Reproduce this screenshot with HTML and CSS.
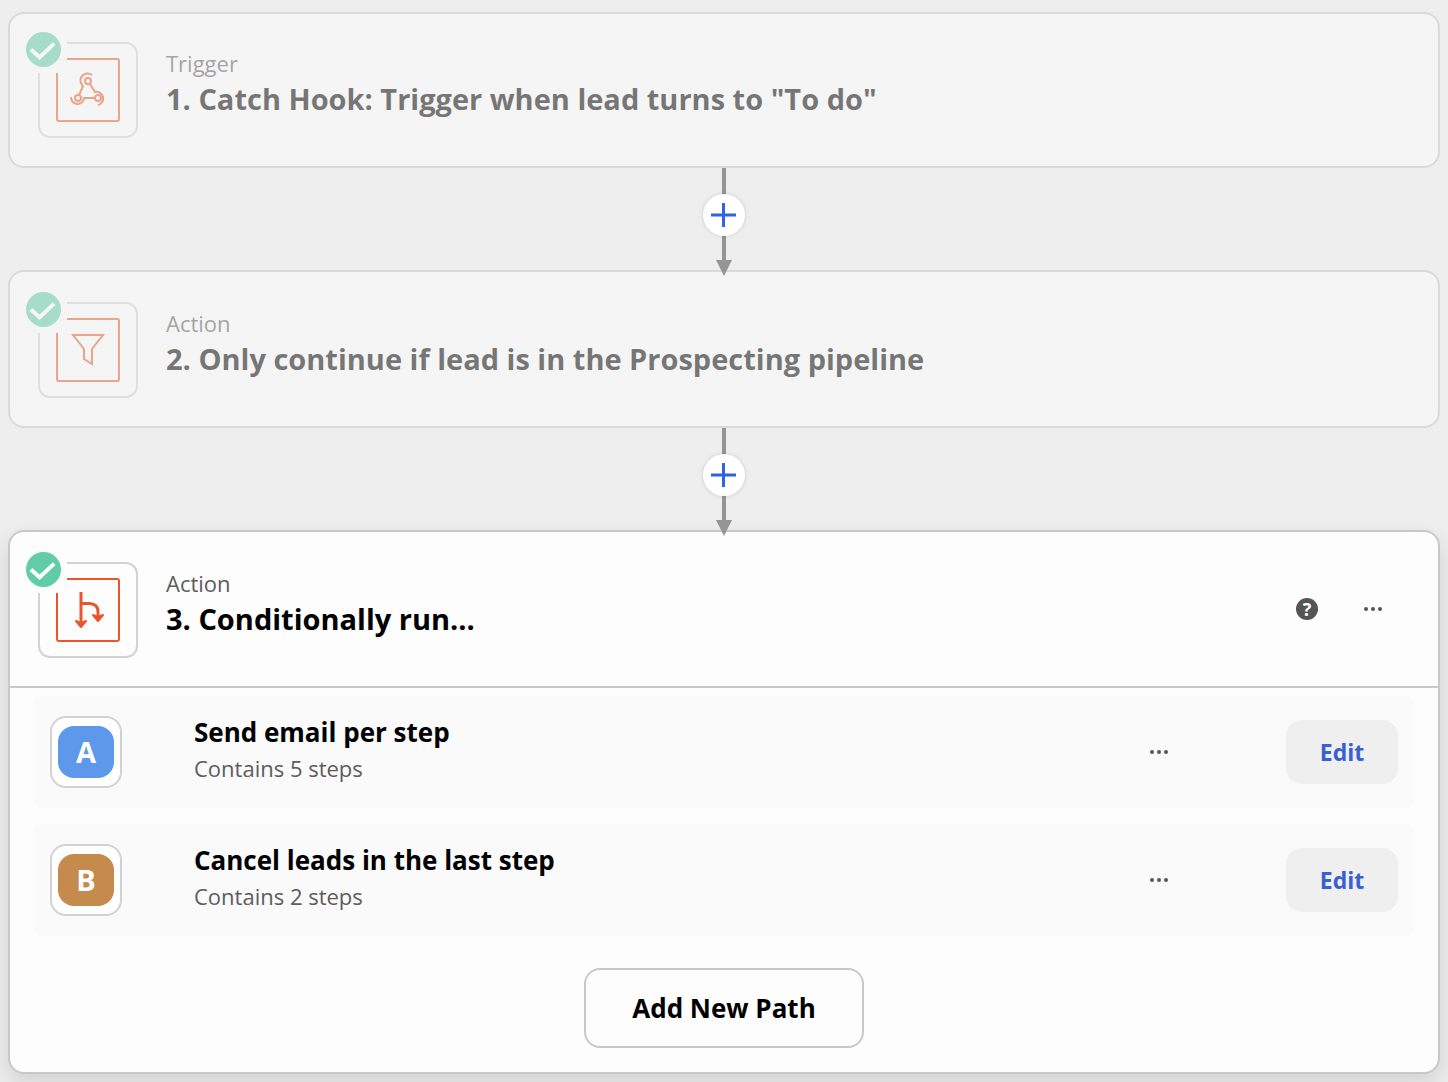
FILE: index.html
```html
<!DOCTYPE html>
<html lang="en">
<head>
  <meta charset="UTF-8">
  <meta name="viewport" content="width=device-width, initial-scale=1.0">
  <title>Edit workflow</title>
  <link rel="stylesheet" href="styles.css">
</head>
<body>

  <main class="flow">

    <section class="card trigger dimmed">
      <header class="card-head">
        <div class="app-icon">
          <svg class="app-svg" viewBox="0 0 64 64" fill="none" stroke="#ea5a26" stroke-width="2">
            <rect x="1" y="1" width="62" height="62" rx="2"/>
            <circle cx="32" cy="23" r="3"/>
            <circle cx="22" cy="40" r="3"/>
            <circle cx="42" cy="40" r="3"/>
            <path d="M36 17 A7 7 0 0 0 27 28 L23 37 M34 26 L39 34 A6.500 6.500 0 1 1 42 47 M39 40 H28 A6.500 6.500 0 1 1 15 39"/>
          </svg>
          <span class="status">
            <svg viewBox="0 0 36 36"><circle cx="18" cy="18" r="18" fill="#60cca8"/><path d="M5 18 L14 26 L29 12" fill="none" stroke="#fff" stroke-width="4"/></svg>
          </span>
        </div>
        <div class="card-text">
          <p class="label">Trigger</p>
          <h2>1. Catch Hook: Trigger when lead turns to "To do"</h2>
        </div>
      </header>
    </section>

    <div class="connector">
      <button class="add-step" aria-label="Add a step">
        <svg viewBox="0 0 26 26" stroke="#2f63e0" stroke-width="3"><path d="M0 13 H25 M12.500 1 V25"/></svg>
      </button>
    </div>

    <section class="card dimmed">
      <header class="card-head">
        <div class="app-icon">
          <svg class="app-svg" viewBox="0 0 64 64" fill="none" stroke="#ea5a26" stroke-width="2">
            <rect x="1" y="1" width="62" height="62" rx="2"/>
            <path d="M17 17 H47 L36 31 V46 L28 41 V31 Z"/>
          </svg>
          <span class="status">
            <svg viewBox="0 0 36 36"><circle cx="18" cy="18" r="18" fill="#60cca8"/><path d="M5 18 L14 26 L29 12" fill="none" stroke="#fff" stroke-width="4"/></svg>
          </span>
        </div>
        <div class="card-text">
          <p class="label">Action</p>
          <h2>2. Only continue if lead is in the Prospecting pipeline</h2>
        </div>
      </header>
    </section>

    <div class="connector">
      <button class="add-step" aria-label="Add a step">
        <svg viewBox="0 0 26 26" stroke="#2f63e0" stroke-width="3"><path d="M0 13 H25 M12.500 1 V25"/></svg>
      </button>
    </div>

    <section class="card active">
      <header class="card-head">
        <div class="app-icon">
          <svg class="app-svg" viewBox="0 0 64 64" fill="none" stroke="#e8562e" stroke-width="2">
            <rect x="1" y="1" width="62" height="62" rx="2"/>
            <path stroke-width="3" d="M25 14 V45 M25 25.500 H33 C39 25.500 42 28 42 34 V38"/>
            <path fill="#e8562e" stroke-linejoin="round" d="M20 43 L25 45 L30 43 L25 49 Z M37 37 L42 39 L47 37 L42 43 Z"/>
          </svg>
          <span class="status">
            <svg viewBox="0 0 36 36"><circle cx="18" cy="18" r="18" fill="#60cca8"/><path d="M5 18 L14 26 L29 12" fill="none" stroke="#fff" stroke-width="4"/></svg>
          </span>
        </div>
        <div class="card-text">
          <p class="label">Action</p>
          <h2>3. Conditionally run...</h2>
        </div>
        <div class="card-actions">
          <button class="icon-button" aria-label="Help"><span class="help">?</span></button>
          <button class="icon-button" aria-label="More options">
            <svg class="dots" viewBox="0 0 18 4" fill="#555"><circle cx="2" cy="2" r="2"/><circle cx="9" cy="2" r="2"/><circle cx="16" cy="2" r="2"/></svg>
          </button>
        </div>
      </header>

      <div class="paths">
        <div class="path">
          <div class="path-icon"><span class="letter blue">A</span></div>
          <div class="path-text">
            <h3>Send email per step</h3>
            <p class="label">Contains 5 steps</p>
          </div>
          <button class="icon-button" aria-label="More options">
            <svg class="dots" viewBox="0 0 18 4" fill="#555"><circle cx="2" cy="2" r="2"/><circle cx="9" cy="2" r="2"/><circle cx="16" cy="2" r="2"/></svg>
          </button>
          <button class="edit">Edit</button>
        </div>

        <div class="path">
          <div class="path-icon"><span class="letter brown">B</span></div>
          <div class="path-text">
            <h3>Cancel leads in the last step</h3>
            <p class="label">Contains 2 steps</p>
          </div>
          <button class="icon-button" aria-label="More options">
            <svg class="dots" viewBox="0 0 18 4" fill="#555"><circle cx="2" cy="2" r="2"/><circle cx="9" cy="2" r="2"/><circle cx="16" cy="2" r="2"/></svg>
          </button>
          <button class="edit">Edit</button>
        </div>
      </div>

      <button class="add-path">Add New Path</button>
    </section>

  </main>

</body>
</html>
```
FILE: styles.css
```css
* {
  box-sizing: border-box;
}

body {
  margin: 0;
  background-color: #eee;
  font-family: "Open Sans", sans-serif;
  color: #000;
}

h2, h3, p {
  margin: 0;
}

button {
  padding: 0;
  border: none;
  background: none;
  color: #000;
  font-family: inherit;
  cursor: pointer;
}

svg {
  display: block;
}

.flow {
  padding: 12px 8px 8px;
}

.card {
  background-color: #fdfdfd;
  border: 2px solid #c8c8c8;
  border-radius: 16px;
}

.card.dimmed {
  opacity: 0.5;
}

.card.active {
  display: flex;
  flex-direction: column;
  padding-bottom: 24px;
  box-shadow: 0 10px 24px rgba(0, 0, 0, 0.12);
}

.card-head {
  display: flex;
  align-items: flex-start;
  gap: 28px;
  padding: 30px 45px 28px 28px;
}

.trigger .card-head {
  padding-top: 28px;
}

.active .card-head {
  border-bottom: 2px solid #c8c8c8;
}

.app-icon {
  position: relative;
  width: 100px;
  height: 96px;
  padding: 14px 16px;
  border: 2px solid #d2d2d2;
  border-radius: 12px;
}

.app-svg {
  width: 64px;
  height: 64px;
}

/* sits over the corner of the icon and hides the lines below it */
.status {
  position: absolute;
  top: -18px;
  left: -20px;
  padding: 6px;
  background-color: #fdfdfd;
}

.status svg {
  width: 35px;
  height: 35px;
}

.card-text {
  flex: 1;
  padding-top: 5px;
}

.label {
  font-size: 22px;
  line-height: 32px;
  color: #5c5c5c;
}

h2 {
  font-size: 29px;
  line-height: 40px;
}

h3 {
  font-size: 26px;
  line-height: 40px;
}

.connector {
  position: relative;
  z-index: 1;
  display: flex;
  justify-content: center;
  height: 102px;
  padding-top: 26px;
  background: linear-gradient(#959595, #959595) center / 4px 100% no-repeat;
}

.connector::after {
  content: "";
  position: absolute;
  bottom: -6px;
  left: 50%;
  margin-left: -8px;
  border: 8px solid transparent;
  border-top: 16px solid #959595;
  border-bottom: 0;
}

.add-step {
  display: flex;
  align-items: center;
  justify-content: center;
  width: 42px;
  height: 42px;
  border-radius: 50%;
  background-color: #fff;
  box-shadow: 0 0 4px rgba(0, 0, 0, 0.15);
}

.add-step svg {
  width: 26px;
  height: 26px;
}

.card-actions {
  display: flex;
  gap: 26px;
  padding-top: 27px;
}

.icon-button {
  display: flex;
  align-items: center;
  justify-content: center;
  width: 40px;
  height: 40px;
}

.help {
  width: 22px;
  height: 22px;
  border-radius: 50%;
  background-color: #555;
  color: #fff;
  font-size: 18px;
  font-weight: bold;
  line-height: 22px;
}

.dots {
  width: 18px;
  height: 4px;
}

.paths {
  display: flex;
  flex-direction: column;
  gap: 16px;
  padding: 8px 24px 32px;
}

.path {
  display: flex;
  align-items: center;
  height: 112px;
  padding: 0 16px;
  border-radius: 8px;
  background-color: #fafafa;
}

.path-icon {
  display: flex;
  align-items: center;
  justify-content: center;
  width: 72px;
  height: 72px;
  border: 2px solid #d2d2d2;
  border-radius: 16px;
  background-color: #fff;
}

.letter {
  width: 56px;
  height: 52px;
  border-radius: 16px;
  color: #fff;
  font-size: 29px;
  font-weight: bold;
  line-height: 52px;
  text-align: center;
}

.blue {
  background-color: #5d98eb;
}

.brown {
  background-color: #c48b4c;
}

.path-text {
  flex: 1;
  padding: 0 0 8px 72px;
}

.edit {
  width: 112px;
  height: 64px;
  margin-left: 107px;
  border-radius: 16px;
  background-color: #efefef;
  color: #3a5fd0;
  font-size: 23px;
  font-weight: bold;
}

.add-path {
  align-self: center;
  width: 280px;
  height: 80px;
  border: 2px solid #c8c8c8;
  border-radius: 16px;
  font-size: 26px;
  font-weight: bold;
}
```
